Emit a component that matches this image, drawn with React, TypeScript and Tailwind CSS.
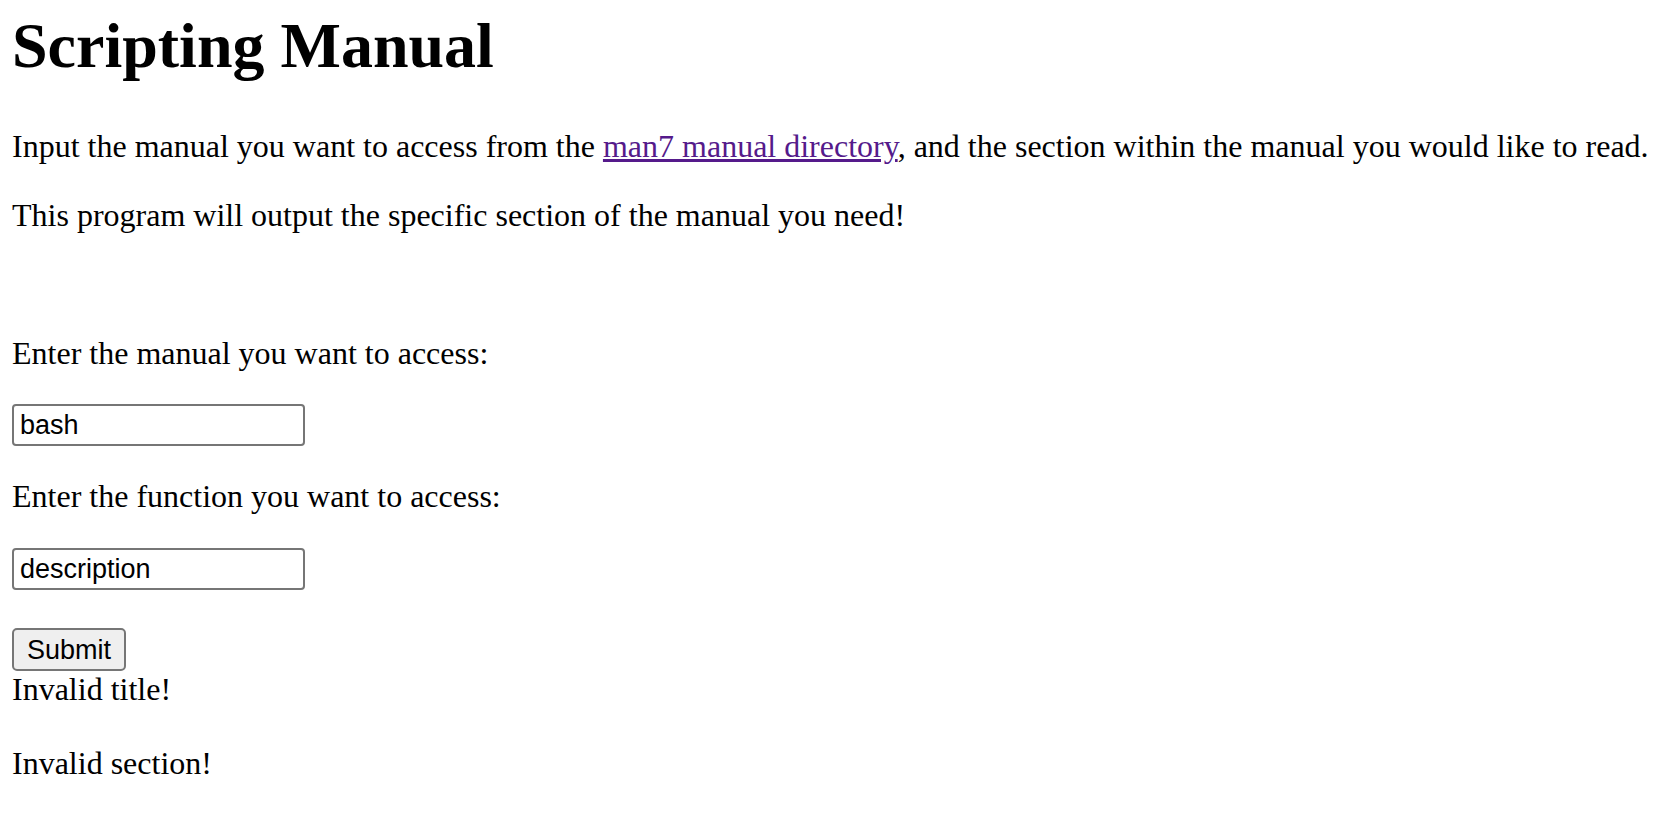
import React from "react";

export default function App() {
  return (
    <div className="min-h-screen bg-white pl-[12px] pt-[9px] text-black font-['Liberation_Serif','Times_New_Roman',serif] text-[32px] leading-[37px]">
      <h1 className="m-0 text-[64px] leading-[74px] font-bold whitespace-nowrap">Scripting Manual</h1>
      <p className="mt-[45px] whitespace-nowrap">
        Input the manual you want to access from the{" "}
        <a href="#" className="text-[#551a8b] underline">man7 manual directory</a>, and the section within the manual you would like to read.
      </p>
      <p className="mt-[32px]">This program will output the specific section of the manual you need!</p>
      <p className="mt-[32px]">&nbsp;</p>
      <form onSubmit={(e) => e.preventDefault()}>
        <p className="mt-[32px]">Enter the manual you want to access:</p>
        <div className="mt-[32px]">
          <input
            type="text"
            defaultValue="bash"
            className="block w-[293px] h-[42px] border-2 border-[#767676] rounded-[4px] pl-[6px] pr-[4px] py-0 font-['Liberation_Sans',Arial,sans-serif] text-[27px] leading-[37px] outline-none"
          />
        </div>
        <p className="mt-[32px]">Enter the function you want to access:</p>
        <div className="mt-[33px]">
          <input
            type="text"
            defaultValue="description"
            className="block w-[293px] h-[42px] border-2 border-[#767676] rounded-[4px] pl-[6px] pr-[4px] py-0 font-['Liberation_Sans',Arial,sans-serif] text-[27px] leading-[37px] outline-none"
          />
        </div>
        <div className="mt-[38px]">
          <button
            type="submit"
            className="block w-[114px] h-[43px] border-2 border-[#767676] rounded-[5px] bg-[#efefef] font-['Liberation_Sans',Arial,sans-serif] text-[27px] leading-[30px] text-black"
          >
            Submit
          </button>
        </div>
      </form>
      <div>
        Invalid title!
        <br />
        <br />
        Invalid section!
      </div>
    </div>
  );
}
